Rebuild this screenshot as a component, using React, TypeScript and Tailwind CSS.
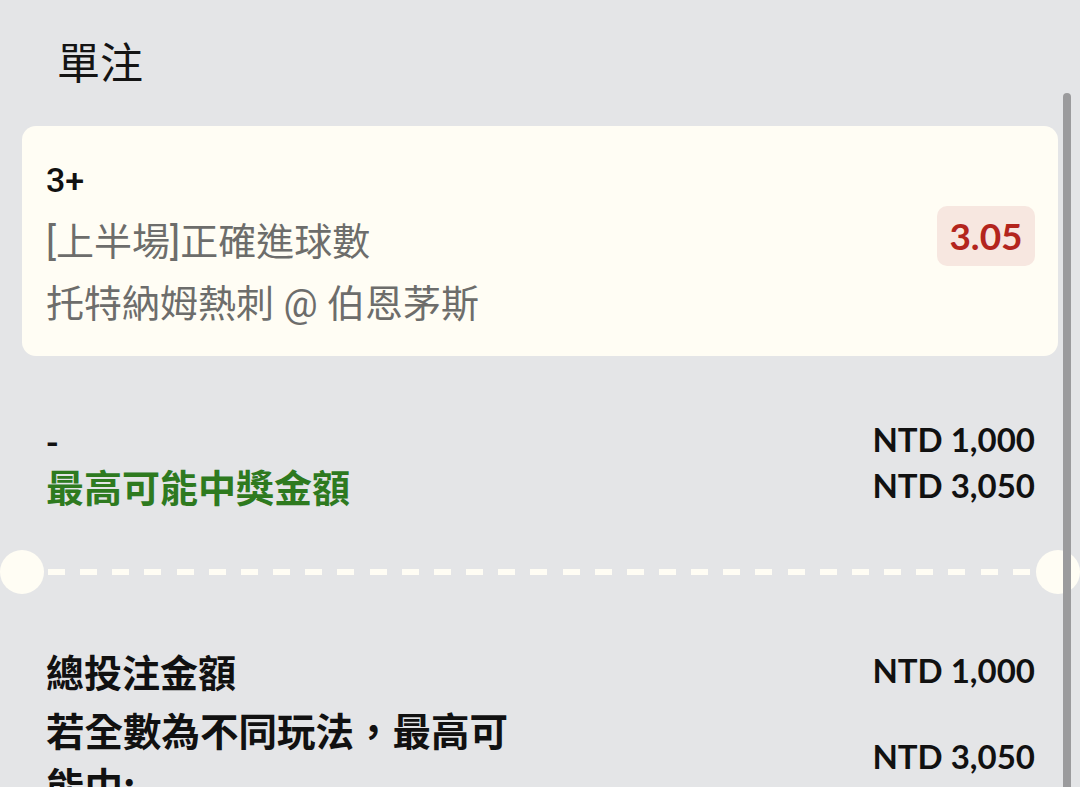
import React from "react";

const cjk = "font-['Noto_Sans_CJK_TC','Noto_Sans_CJK_SC',sans-serif]";
const rcjk = "font-['Roboto','Noto_Sans_CJK_TC','Noto_Sans_CJK_SC',sans-serif]";
const lato = "font-['Lato','Liberation_Sans',sans-serif]";

export default function App() {
  const dashes = Array.from({ length: 31 });
  return (
    <div className={`relative w-[1080px] h-[787px] overflow-hidden bg-[#e4e5e7] ${cjk}`}>
      {/* title */}
      <div className="pl-[57px] pt-[34px] h-[126px]">
        <div className="text-[43px] leading-[52px] text-[#141414]">單注</div>
      </div>

      {/* card */}
      <div className="mx-[22px] h-[230px] rounded-[14px] bg-[#fffdf4] pl-[24px] pr-[23px] pt-[23px] flex justify-between">
        <div className={`flex flex-col ${rcjk}`}>
          <div className="text-[34px] leading-[62px] font-medium text-[#111]">3+</div>
          <div className="text-[38px] leading-[62px] text-[#6d6d6b]">[上半場]正確進球數</div>
          <div className="text-[38px] leading-[62px] text-[#6d6d6b]">托特納姆熱刺 @ 伯恩茅斯</div>
        </div>
        <div className="mt-[57px] h-[60px] w-[98px] rounded-[10px] bg-[#f7e7e0] flex items-center justify-center">
          <span className={`${lato} text-[37px] font-bold text-[#b3251d]`}>3.05</span>
        </div>
      </div>

      {/* section 2 */}
      <div className="pl-[46px] pr-[45px] pt-[61px]">
        <div className="flex justify-between items-center h-[46px]">
          <span className="text-[34px] font-bold text-[#111] leading-[46px]">-</span>
          <span className={`${lato} text-[33px] font-bold text-[#111]`}>NTD 1,000</span>
        </div>
        <div className="flex justify-between items-center h-[46px]">
          <span className="text-[38px] font-bold text-[#2e7a1f] leading-[46px]">最高可能中獎金額</span>
          <span className={`${lato} text-[33px] font-bold text-[#111]`}>NTD 3,050</span>
        </div>
      </div>

      {/* dashed separator */}
      <div className="mt-[41px] h-[44px] flex items-center">
        <div className="w-[44px] h-[44px] rounded-full bg-[#fffdf4] shrink-0" />
        <div className="flex-1 ml-[4px] mr-[6px] flex justify-between">
          {dashes.map((_, i) => (
            <div key={i} className="w-[17px] h-[6px] bg-[#fffdf4]" />
          ))}
        </div>
        <div className="w-[44px] h-[44px] rounded-full bg-[#fffdf4] shrink-0" />
      </div>

      {/* section 3 */}
      <div className="pl-[46px] pr-[45px] mt-[54px]">
        <div className="flex justify-between items-center h-[46px]">
          <span className="text-[38px] font-bold text-[#111] leading-[46px]">總投注金額</span>
          <span className={`${lato} text-[33px] font-bold text-[#111]`}>NTD 1,000</span>
        </div>
        <div className="mt-[8px] flex justify-between items-center">
          <div className="w-[480px] text-[38.5px] font-bold text-[#111] leading-[55px]">
            若全數為不同玩法，最高可能中:
          </div>
          <span className={`${lato} text-[33px] font-bold text-[#111]`}>NTD 3,050</span>
        </div>
      </div>

      {/* scrollbar overlay */}
      <div className="absolute left-[1063px] top-[93px] w-[8px] h-[720px] rounded-full bg-[#9b9b9d]" />
    </div>
  );
}
